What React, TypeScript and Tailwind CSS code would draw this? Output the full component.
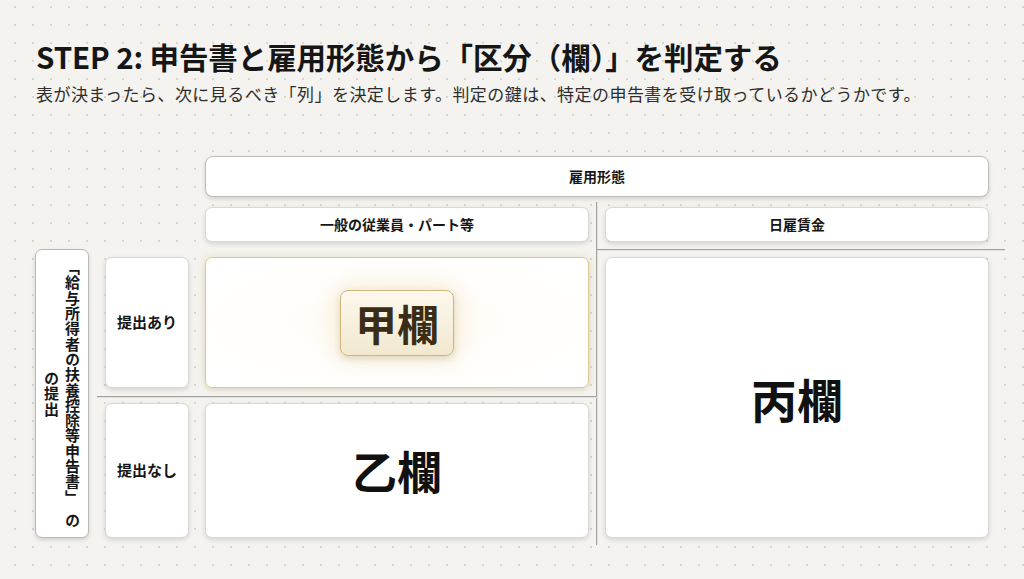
export default function App() {
  const card =
    "bg-white border border-[#d9d9d6] rounded-[7px] shadow-[0_2px_5px_rgba(0,0,0,0.13)] flex items-center justify-center";
  return (
    <div className="w-[1024px] h-[579px] overflow-hidden bg-[#f4f3ef] bg-[radial-gradient(circle,#d6d6d0_0.9px,transparent_1.3px)] bg-[length:18px_18px] bg-[position:6px_-2px] font-['Noto_Sans_CJK_JP','Noto_Sans',sans-serif] text-[#161616]">
      <div className="pt-[38px] pl-[36px]">
        <h1 className="text-[29.5px] leading-[36px] font-bold tracking-[-0.1px]">
          STEP 2: 申告書と雇用形態から「区分（欄）」を判定する
        </h1>
        <p className="mt-[8px] text-[17px] leading-[24px] text-[#2e2e2e] tracking-[0.45px]">
          表が決まったら、次に見るべき「列」を決定します。判定の鍵は、特定の申告書を受け取っているかどうかです。
        </p>
      </div>

      <div className="relative ml-[35px] mt-[50px] grid grid-cols-[54px_84px_384px_384px] grid-rows-[41px_40px_136px_135px] gap-x-4 gap-y-[10px]">
        {/* separator lines */}
        <div className="absolute left-[561px] top-[46px] h-[343px] w-[1px] bg-[#a3a3a0] shadow-[1px_0_0_#e0e0dc]" />
        <div className="absolute left-[562px] top-[93px] w-[408px] h-[1px] bg-[#a3a3a0] shadow-[0_1px_0_#e0e0dc]" />
        <div className="absolute left-[62px] top-[240px] w-[500px] h-[1px] bg-[#a3a3a0] shadow-[0_1px_0_#e0e0dc]" />

        <div className="col-start-3 col-span-2 row-start-1 h-[41px] bg-white border border-[#bdbdba] rounded-[8px] shadow-[0_2px_4px_rgba(0,0,0,0.15)] flex items-center justify-center text-[14px] font-bold">
          雇用形態
        </div>

        <div className={`col-start-3 row-start-2 h-[35px] ${card} text-[14px] font-bold`}>
          一般の従業員・パート等
        </div>
        <div className={`col-start-4 row-start-2 h-[35px] ${card} text-[14px] font-bold`}>
          日雇賃金
        </div>

        <div className="col-start-1 row-start-3 row-span-2 -mt-2 h-[289px] bg-white border border-[#b9b9b6] rounded-[7px] shadow-[0_2px_4px_rgba(0,0,0,0.15)] flex items-center justify-center">
          <div className="[writing-mode:vertical-rl] text-center text-[15px] leading-[21px] font-bold h-[280px] tracking-[0.3px]">
            「給与所得者の扶養控除等申告書」　の
            <br />
            の提出
          </div>
        </div>

        <div className={`col-start-2 row-start-3 h-[131px] ${card} text-[15px] font-bold`}>
          提出あり
        </div>
        <div className={`col-start-2 row-start-4 h-[135px] ${card} text-[15px] font-bold`}>
          提出なし
        </div>

        <div className="col-start-3 row-start-3 h-[131px] rounded-[7px] border border-[#dcc893] bg-[radial-gradient(ellipse_at_center,#fffaf0_0%,#fffefc_45%,#ffffff_100%)] shadow-[0_0_8px_rgba(214,186,120,0.3),0_2px_4px_rgba(0,0,0,0.08)] flex items-center justify-center">
          <div className="w-[114px] h-[66px] rounded-[8px] border border-[#cdb57e] bg-[linear-gradient(180deg,#fcf8ec,#f1e8cf)] shadow-[0_0_20px_6px_rgba(226,202,140,0.3),0_3px_6px_rgba(120,90,30,0.2)] flex items-center justify-center">
            <span className="text-[42px] leading-none font-bold text-[#3a2d17]">甲欄</span>
          </div>
        </div>

        <div className={`col-start-3 row-start-4 h-[135px] ${card}`}>
          <span className="text-[45px] leading-none font-bold text-[#111]">乙欄</span>
        </div>

        <div className={`col-start-4 row-start-3 row-span-2 h-[281px] ${card}`}>
          <span className="text-[46px] leading-none font-bold text-[#111]">丙欄</span>
        </div>
      </div>
    </div>
  );
}
